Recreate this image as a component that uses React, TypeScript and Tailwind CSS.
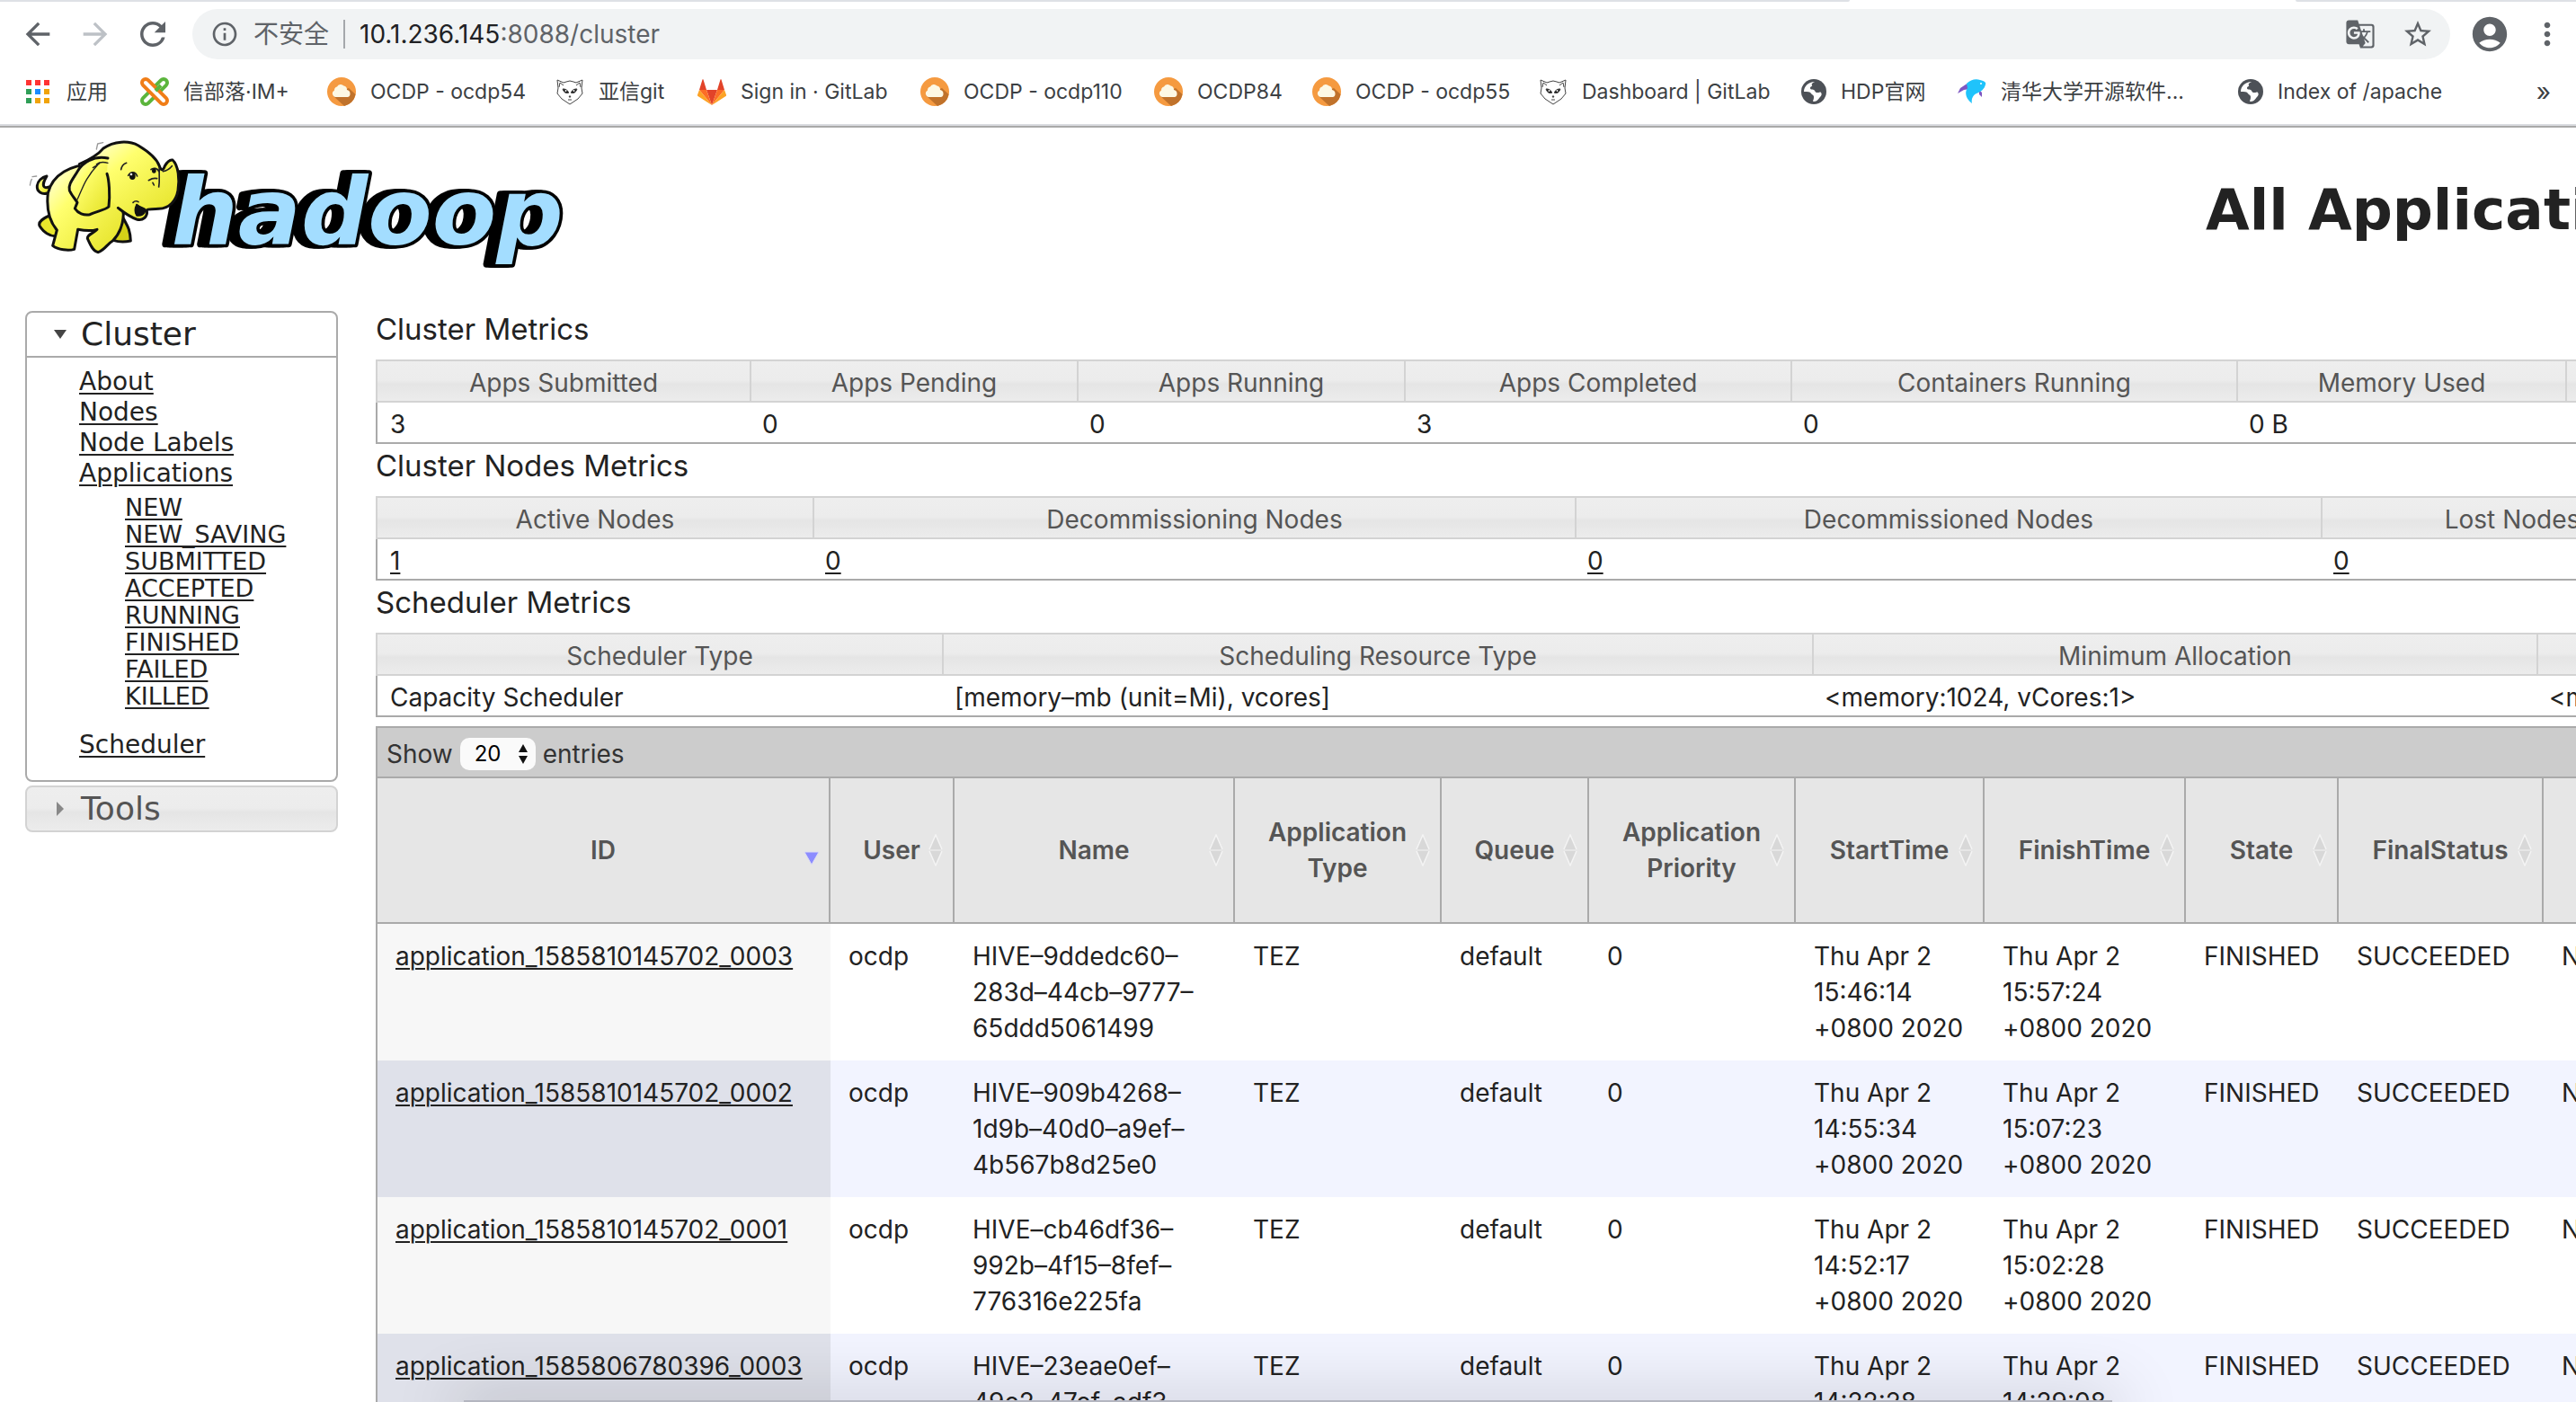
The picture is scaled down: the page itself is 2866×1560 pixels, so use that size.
import type { ReactNode } from 'react';
import {
  MdAccountCircle,
  MdArrowBack,
  MdArrowForward,
  MdGTranslate,
  MdInfoOutline,
  MdMoreVert,
  MdRefresh,
  MdStarBorder,
} from 'react-icons/md';

function AppsIcon() {
  const dots = ['#f33', '#f33', '#f33', '#2f9e57', '#1a8cff', '#f0a30a', '#2f9e57', '#f0a30a', '#f0a30a'];
  return (
    <svg viewBox="0 0 32 32" className="w-8 h-8 shrink-0">
      {dots.map((fill, i) => (
        <rect key={i} x={3 + (i % 3) * 10} y={3 + Math.floor(i / 3) * 10} width="6" height="6" fill={fill} />
      ))}
    </svg>
  );
}

function KnotIcon() {
  return (
    <svg viewBox="0 0 32 32" className="w-8 h-8 shrink-0" fill="none">
      <g strokeLinecap="round">
        <path d="M26 6L6 26" stroke="#5bb53c" strokeWidth="12" />
        <path d="M26 6L6 26" stroke="#fff" strokeWidth="4" />
        <path d="M6 6L26 26" stroke="#f07d17" strokeWidth="12" />
        <path d="M6 6L26 26" stroke="#fff" strokeWidth="4" />
        <path d="M17 15L23 9" stroke="#5bb53c" strokeWidth="4" strokeLinecap="butt" />
      </g>
    </svg>
  );
}

function CloudIcon() {
  return (
    <svg viewBox="0 0 32 32" className="w-8 h-8 shrink-0">
      <circle cx="16" cy="16" r="16" fill="#f59a40" />
      <path d="M6 20L19 32A16 16 0 0 0 31.500 19L24 12Z" fill="#c0722b" />
      <path d="M9 22a4 4 0 0 1-1-7.500 4 4 0 0 1 3-4 4.500 4.500 0 0 1 7.500-1 4.500 4.500 0 0 1 3.500 4.500 4.200 4.200 0 0 1 1 8z" fill="#fdf8e4" />
    </svg>
  );
}

function FoxIcon() {
  return (
    <svg viewBox="0 0 32 32" className="w-8 h-8 shrink-0" fill="none" stroke="#444" strokeWidth="1">
      <path d="M2 3l1 9-1 6 5 6 9 6 9-6 5-6-1-6 1-9-7 3-3-1-4-1-4 1-3 1z" fill="#fff" />
      <path d="M4 11l1-5 4 3M28 11l-1-5-4 3" />
      <path d="M8 13q4-1 7 4-5 2-7-4zM24 13q-4-1-7 4 5 2 7-4z" fill="#111" />
      <circle cx="11.500" cy="15" r="1" fill="#fff" stroke="none" />
      <circle cx="20.500" cy="15" r="1" fill="#fff" stroke="none" />
      <path d="M15 21h2l-1 1.500zM14 25h4" fill="#111" />
    </svg>
  );
}

function TanukiIcon() {
  return (
    <svg viewBox="0 0 32 32" className="w-8 h-8 shrink-0">
      <path d="M16 31l6-17H10z" fill="#e24329" />
      <path d="M16 31L10 14H2z" fill="#fc6d26" />
      <path d="M2 14L0 19.500c-.2.600 0 1.200.5 1.500L16 31z" fill="#fca326" />
      <path d="M2 14h8L6.500 2.500c-.2-.5-.9-.5-1 0z" fill="#e24329" />
      <path d="M16 31l6-17h8z" fill="#fc6d26" />
      <path d="M30 14l2 5.500c.2.600 0 1.200-.5 1.500L16 31z" fill="#fca326" />
      <path d="M30 14h-8l3.500-11.500c.2-.5.9-.5 1 0z" fill="#e24329" />
    </svg>
  );
}

function GlobeIcon() {
  return (
    <svg viewBox="0 0 32 32" className="w-8 h-8 shrink-0">
      <circle cx="18" cy="16" r="14" fill="#4d5157" />
      <path d="M19 5c-2 1-4 2-3 4 1 1-2 1-2 3s2 1 4 2 1 3 4 3 3-1 4 0 1 3-1 5-3 5-7 5c-2 0 0-3-1-4s-2 0-2-3-3-3-5-3l-3-1c0-6 5-11 12-11z" fill="#fff" />
      <path d="M7 16c4 0 7 0 8 2s3 1 3 4-1 3-1 5c-6 0-10-5-10-11z" fill="#4d5157" />
    </svg>
  );
}

function DolphinIcon() {
  return (
    <svg viewBox="0 0 32 32" className="w-8 h-8 shrink-0">
      <path d="M12 6L3 12 0 18l7-4 7-1z" fill="#7e57c2" />
      <path d="M24 14l3 3v5l-3-3z" fill="#7e57c2" />
      <path d="M10 7c4-4 10-6 15-4 5 1 7 3 6 5-1 5-5 8-10 10-4 2-6 6-5 11-6-4-9-12-5-17z" fill="#1fc3fb" />
      <circle cx="26" cy="7" r="1" fill="#fff" />
    </svg>
  );
}

const bookmarks: { label: string; icon: ReactNode; width: string }[] = [
  { label: '应用', icon: <AppsIcon />, width: 'w-[98px]' },
  { label: '信部落·IM+', icon: <KnotIcon />, width: 'w-[176px]' },
  { label: 'OCDP - ocdp54', icon: <CloudIcon />, width: 'w-[222px]' },
  { label: '亚信git', icon: <FoxIcon />, width: 'w-[126px]' },
  { label: 'Sign in · GitLab', icon: <TanukiIcon />, width: 'w-[216px]' },
  { label: 'OCDP - ocdp110', icon: <CloudIcon />, width: 'w-[228px]' },
  { label: 'OCDP84', icon: <CloudIcon />, width: 'w-[144px]' },
  { label: 'OCDP - ocdp55', icon: <CloudIcon />, width: 'w-[220px]' },
  { label: 'Dashboard | GitLab', icon: <FoxIcon />, width: 'w-[256px]' },
  { label: 'HDP官网', icon: <GlobeIcon />, width: 'w-[146px]' },
  { label: '清华大学开源软件...', icon: <DolphinIcon />, width: 'w-[276px]' },
  { label: 'Index of /apache', icon: <GlobeIcon />, width: 'w-[228px]' },
];

const iconButton = 'w-10 h-10 flex items-center justify-center shrink-0 text-[#5f6368]';

function BrowserChrome() {
  return (
    <div className="bg-white border-b-2 border-[#a9a9a9] text-[#3c4043]">
      <div className="flex h-0.5">
        <div className="flex-1 bg-[#dee1e6] rounded-br-sm" />
        <div className="w-[496px]" />
        <div className="w-[312px] bg-[#dee1e6] rounded-bl-sm" />
      </div>

      {/* Toolbar */}
      <div className="flex items-center gap-6 h-[72px] pl-[22px] pr-3">
        <button aria-label="Back" className={iconButton}>
          <MdArrowBack className="w-10 h-10 shrink-0" />
        </button>
        <button aria-label="Forward" className="w-10 h-10 flex items-center justify-center shrink-0 text-[#bdc1c6]">
          <MdArrowForward className="w-10 h-10 shrink-0" />
        </button>
        <button aria-label="Reload" className={iconButton}>
          <MdRefresh className="w-[42px] h-[42px] shrink-0" />
        </button>
        <div className="flex-1 flex items-center h-14 rounded-full bg-[#f1f3f4] pl-5 pr-4 gap-4 text-[28px] leading-10 text-[#5f6368]">
          <MdInfoOutline className="w-8 h-8 shrink-0" />
          <span>不安全</span>
          <span className="w-0.5 h-8 bg-[#a5a8ac]" />
          <div role="textbox" aria-label="Address" contentEditable suppressContentEditableWarning className="flex-1 outline-none">
            <span className="text-[#202124]">10.1.236.145</span>:8088/cluster
          </div>
          <div className="flex gap-6">
            <button aria-label="Translate" className={iconButton}>
              <MdGTranslate className="w-[34px] h-[34px] shrink-0" />
            </button>
            <button aria-label="Bookmark" className={iconButton}>
              <MdStarBorder className="w-9 h-9 shrink-0" />
            </button>
          </div>
        </div>
        <button aria-label="Profile" className={iconButton}>
          <MdAccountCircle className="w-[46px] h-[46px] shrink-0" />
        </button>
        <button aria-label="Menu" className={iconButton}>
          <MdMoreVert className="w-10 h-10 shrink-0" />
        </button>
      </div>

      {/* Bookmarks */}
      <div className="flex items-center pl-[26px] pr-7 pb-2 border-b-2 border-[#dadce0]">
        <nav className="flex-1 flex items-center gap-8 h-14 text-[23px] leading-8 whitespace-nowrap">
          {bookmarks.map((b) => (
            <a key={b.label} href="#" className={`flex items-center gap-4 ${b.width}`}>
              {b.icon}
              {b.label}
            </a>
          ))}
        </nav>
        <button aria-label="More bookmarks" className="text-[28px] leading-8">
          »
        </button>
      </div>
    </div>
  );
}

function HadoopLogo() {
  return (
    <svg viewBox="0 6 1920 504" className="w-[640px] h-[168px] shrink-0" role="img" aria-label="hadoop">
      <defs>
        <linearGradient id="skin" x1="0" y1="0" x2="1" y2="1">
          <stop offset="0" stopColor="#fffff0" />
          <stop offset="0.35" stopColor="#ffff6e" />
          <stop offset="1" stopColor="#e3e022" />
        </linearGradient>
      </defs>
      <text
        x="512"
        y="396"
        fontFamily="DejaVu Sans"
        fontWeight="700"
        fontStyle="italic"
        fontSize="312"
        fill="#a3ddff"
        stroke="#000"
        strokeWidth="22"
        strokeLinejoin="round"
        paintOrder="stroke"
        className="[filter:drop-shadow(-12px_0_0_#000)_drop-shadow(-18px_0_0_#000)]"
      >
        hadoop
      </text>
      <g fill="url(#skin)" stroke="#111" strokeWidth="9" strokeLinejoin="round" strokeLinecap="round">
        <path d="M98 225C80 230 62 220 64 200 66 184 80 172 96 168 88 182 80 196 88 204 92 208 98 206 104 204" />
        <path d="M104 300C88 308 66 318 72 334 84 354 106 370 128 368L140 320Z" fill="#e9e62c" />
        <path d="M350 305C362 330 374 340 376 384 358 388 336 388 318 382L330 320Z" fill="#d4d118" />
        <path d="M245 128C180 130 115 160 100 225 94 280 108 322 130 348L116 400C134 414 168 418 188 412L200 346C222 350 246 352 264 346 252 360 230 362 232 376 240 394 250 420 268 422 290 414 298 394 316 384 334 366 350 340 352 296L330 130Z" />
        <path d="M334 274C352 288 368 302 396 312 416 318 434 304 430 282 432 276 448 280 470 277 506 276 528 250 534 216 540 180 536 132 516 114 506 112 498 120 490 134 486 148 478 152 472 134 462 106 432 84 402 66 370 48 320 50 284 76 268 96 240 112 205 128" />
        <path d="M396 262C410 274 424 274 426 280 424 296 412 302 396 300 388 288 390 274 396 262Z" fill="#111" strokeWidth="4" />
        <path d="M300 108C250 98 215 125 200 150 185 176 166 196 172 216 180 234 194 248 198 256L190 276C200 292 220 300 240 296 264 284 290 282 303 270 308 230 304 180 297 160" />
      </g>
      <g fill="none" stroke="#222" strokeWidth="5" strokeLinecap="round">
        <path d="M344 146C346 134 352 128 362 124M368 166C376 152 392 152 398 168M444 146C452 138 466 142 470 152M472 140C470 166 474 180 470 204M436 182C446 176 456 174 464 176M450 190L454 198M484 152C494 150 506 144 514 134M384 256C390 250 396 250 402 254" />
        <path d="M198 246C214 214 222 176 268 128M250 140L272 126M300 124C286 120 270 122 262 128" strokeWidth="4" />
        <path d="M40 198C42 190 42 184 46 178M48 170L62 168M262 78L266 60M266 60L284 56" stroke="#999" strokeWidth="4" />
      </g>
      <ellipse cx="382" cy="168" rx="10" ry="12" fill="#111" />
      <ellipse cx="454" cy="150" rx="7" ry="8" fill="#111" />
      <circle cx="378" cy="162" r="4" fill="#fff" />
    </svg>
  );
}

const appStates = ['NEW', 'NEW_SAVING', 'SUBMITTED', 'ACCEPTED', 'RUNNING', 'FINISHED', 'FAILED', 'KILLED'];

const glass = 'bg-[linear-gradient(#eeeeee_0%,#ececec_48%,#e5e5e5_58%,#ececec_100%)]';

function Sidebar() {
  return (
    <aside className="w-[348px] shrink-0 pt-1 font-['DejaVu_Sans',sans-serif]">
      <div className="border-2 border-[#aaaaaa] rounded-lg">
        <button className="w-full flex items-center h-[50px] pl-[30px] gap-4 border-b-2 border-[#aaaaaa] text-4xl">
          <svg viewBox="0 0 14 10" className="w-3.5 h-2.5">
            <path d="M0 0h14L7 10z" fill="#454545" />
          </svg>
          Cluster
        </button>
        <ul className="pl-[58px] pt-2.5 pb-[22px] text-[28px] leading-[34px] underline underline-offset-3 decoration-2">
          <li><a href="#">About</a></li>
          <li><a href="#">Nodes</a></li>
          <li><a href="#">Node Labels</a></li>
          <li>
            <a href="#">Applications</a>
            <ul className="pl-[51px] pt-1.5 pb-[22px] text-[27px] leading-[30px]">
              {appStates.map((state) => (
                <li key={state}><a href="#">{state}</a></li>
              ))}
            </ul>
          </li>
          <li><a href="#">Scheduler</a></li>
        </ul>
      </div>
      <button className={`mt-1 w-full flex items-center h-[52px] pl-[30px] gap-4 border-2 border-[#d3d3d3] rounded-lg text-4xl text-[#555555] ${glass}`}>
        <svg viewBox="0 0 14 16" className="w-3.5 h-4">
          <path d="M3 0v16l8-8z" fill="#888888" />
        </svg>
        Tools
      </button>
    </aside>
  );
}

type Metric = { label: string; value: string; width: number };

const clusterMetrics: Metric[] = [
  { label: 'Apps Submitted', value: '3', width: 416 },
  { label: 'Apps Pending', value: '0', width: 364 },
  { label: 'Apps Running', value: '0', width: 364 },
  { label: 'Apps Completed', value: '3', width: 430 },
  { label: 'Containers Running', value: '0', width: 496 },
  { label: 'Memory Used', value: '0 B', width: 366 },
  { label: '', value: '', width: 366 },
];

const nodeMetrics: Metric[] = [
  { label: 'Active Nodes', value: '1', width: 486 },
  { label: 'Decommissioning Nodes', value: '0', width: 848 },
  { label: 'Decommissioned Nodes', value: '0', width: 830 },
  { label: 'Lost Nodes', value: '0', width: 424 },
];

const schedulerMetrics: Metric[] = [
  { label: 'Scheduler Type', value: 'Capacity Scheduler', width: 630 },
  { label: 'Scheduling Resource Type', value: '[memory–mb (unit=Mi), vcores]', width: 968 },
  { label: 'Minimum Allocation', value: '<memory:1024, vCores:1>', width: 806 },
  { label: '', value: '<memory', width: 806 },
];

function MetricsTable({ title, metrics, linked }: { title: string; metrics: Metric[]; linked?: boolean }) {
  return (
    <section>
      <h2 className="pt-1 pb-3.5 text-[33px] leading-10">{title}</h2>
      <table className="table-fixed w-0 border-separate border-spacing-0 text-[28px] leading-[34px] whitespace-nowrap">
        <colgroup>
          {metrics.map((m, i) => (
            <col key={i} style={{ width: m.width }} />
          ))}
        </colgroup>
        <thead>
          <tr>
            {metrics.map((m, i) => (
              <th key={i} className={`px-3.5 pt-[7px] pb-[3px] border-y-2 border-l-2 border-[#d3d3d3] font-normal text-[#555555] ${glass}`}>
                {m.label}
              </th>
            ))}
          </tr>
        </thead>
        <tbody>
          <tr>
            {metrics.map((m, i) => (
              <td key={i} className="h-[46px] px-3.5 pt-[7px] pb-[3px] border-b-2 border-[#aaaaaa] first:border-l-2">
                {linked ? <a href="#" className="underline underline-offset-3 decoration-2">{m.value}</a> : m.value}
              </td>
            ))}
          </tr>
        </tbody>
      </table>
    </section>
  );
}

const columns = [
  { label: 'ID', width: 504 },
  { label: 'User', width: 138 },
  { label: 'Name', width: 312 },
  { label: 'Application Type', width: 230 },
  { label: 'Queue', width: 164 },
  { label: 'Application Priority', width: 230 },
  { label: 'StartTime', width: 210 },
  { label: 'FinishTime', width: 224 },
  { label: 'State', width: 170 },
  { label: 'FinalStatus', width: 228 },
  { label: '', width: 200 },
];

const apps = [
  {
    id: 'application_1585810145702_0003',
    name: 'HIVE–9ddedc60–283d–44cb–9777–65ddd5061499',
    start: 'Thu Apr 2 15:46:14 +0800 2020',
    finish: 'Thu Apr 2 15:57:24 +0800 2020',
  },
  {
    id: 'application_1585810145702_0002',
    name: 'HIVE–909b4268–1d9b–40d0–a9ef–4b567b8d25e0',
    start: 'Thu Apr 2 14:55:34 +0800 2020',
    finish: 'Thu Apr 2 15:07:23 +0800 2020',
  },
  {
    id: 'application_1585810145702_0001',
    name: 'HIVE–cb46df36–992b–4f15–8fef–776316e225fa',
    start: 'Thu Apr 2 14:52:17 +0800 2020',
    finish: 'Thu Apr 2 15:02:28 +0800 2020',
  },
  {
    id: 'application_1585806780396_0003',
    name: 'HIVE–23eae0ef–49e2–47ef–adf3–',
    start: 'Thu Apr 2 14:22:28 +0800 2020',
    finish: 'Thu Apr 2 14:29:08 +0800 2020',
  },
];

function SortIcon({ active }: { active?: boolean }) {
  return (
    <svg viewBox="0 0 18 36" className="absolute right-2.5 top-1/2 -translate-y-1/2 w-[18px] h-9">
      {active ? (
        <path d="M1 20h16L9 34z" fill="#8c8cff" stroke="#dcdcf5" />
      ) : (
        <g fill="#d8d8d8" stroke="#f4f4f4" strokeWidth="1.500">
          <path d="M2 17L9 1l7 16M2 19l7 16 7-16" />
        </g>
      )}
    </svg>
  );
}

function AppsTable() {
  return (
    <section className="mt-2.5 border-l-2 border-t-2 border-[#aaaaaa] text-[28px] leading-10">
      <div className="flex items-center h-[54px] pl-2.5 pt-1 gap-2 bg-[#cccccc] text-[#333333]">
        <label htmlFor="page-size">Show</label>
        <div className="relative">
          <select id="page-size" className="appearance-none block w-[84px] h-9 pl-4 rounded-[10px] bg-[#fafafa] text-2xl leading-9 text-black">
            <option>20</option>
          </select>
          <svg viewBox="0 0 12 22" className="absolute right-2 top-[7px] w-3 h-[22px] pointer-events-none">
            <path d="M6 0l5 9H1zM6 22l5-9H1z" fill="#111" />
          </svg>
        </div>
        <span>entries</span>
      </div>
      <table className="table-fixed w-0 border-separate border-spacing-0">
        <colgroup>
          {columns.map((c, i) => (
            <col key={i} style={{ width: c.width }} />
          ))}
        </colgroup>
        <thead>
          <tr>
            {columns.map((c, i) => (
              <th key={i} className="relative h-[164px] px-5 border-y-2 border-r-2 border-[#aaaaaa] bg-[#e6e6e6] font-semibold text-[#555555]">
                {c.label}
                <SortIcon active={i === 0} />
              </th>
            ))}
          </tr>
        </thead>
        <tbody>
          {apps.map((app) => (
            <tr key={app.id} className="group align-top even:bg-[#f2f4ff]">
              <td className="px-5 py-4 bg-[#f7f7f7] group-even:bg-[#dfe1ea]">
                <a href="#" className="underline underline-offset-3 decoration-2">{app.id}</a>
              </td>
              <td className="px-5 py-4">ocdp</td>
              <td className="px-5 py-4">{app.name}</td>
              <td className="px-5 py-4">TEZ</td>
              <td className="px-5 py-4">default</td>
              <td className="px-5 py-4">0</td>
              <td className="px-5 py-4">{app.start}</td>
              <td className="px-5 py-4">{app.finish}</td>
              <td className="px-5 py-4">FINISHED</td>
              <td className="px-5 py-4">SUCCEEDED</td>
              <td className="px-5 py-4">N/A</td>
            </tr>
          ))}
        </tbody>
      </table>
    </section>
  );
}

export default function App() {
  return (
    <div className="relative h-screen overflow-hidden bg-white font-['Inter','Noto_Sans_CJK_SC',sans-serif] text-[#222222]">
      <BrowserChrome />

      <header className="flex items-center justify-between pl-5 mb-8 overflow-hidden">
        <HadoopLogo />
        <h1 className="w-[412px] whitespace-nowrap font-['DejaVu_Sans',sans-serif] font-bold text-[63px] leading-[80px] pt-4">
          All Applications
        </h1>
      </header>

      <div className="flex gap-[42px] pl-7">
        <Sidebar />
        <main className="flex-1 min-w-0">
          <MetricsTable title="Cluster Metrics" metrics={clusterMetrics} />
          <MetricsTable title="Cluster Nodes Metrics" metrics={nodeMetrics} linked />
          <MetricsTable title="Scheduler Metrics" metrics={schedulerMetrics} />
          <AppsTable />
        </main>
      </div>

      {/* Dock shadow along the bottom edge */}
      <div className="absolute bottom-0 left-[18%] right-[18%] h-0.5 bg-[#b4b6c0] shadow-[0_10px_70px_10px_rgba(0,0,0,0.3)] pointer-events-none" />
    </div>
  );
}
